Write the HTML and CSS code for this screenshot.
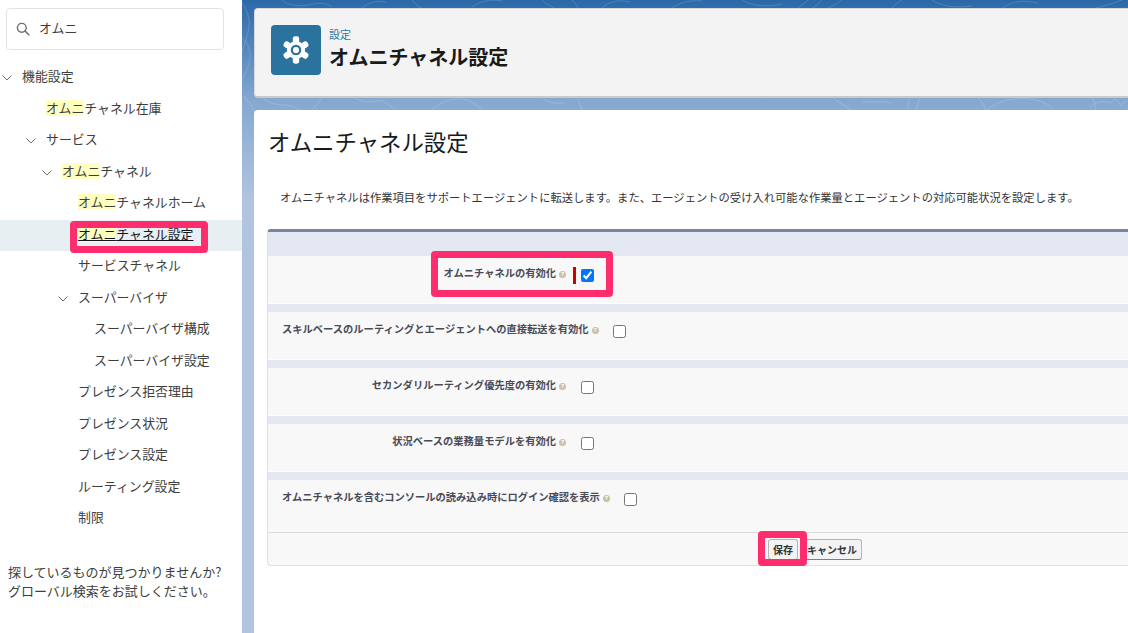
FILE: index.html
```html
<!DOCTYPE html>
<html lang="ja">
<head>
<meta charset="utf-8">
<title>オムニチャネル設定</title>
<link rel="stylesheet" href="styles.css">
</head>
<body>
<div class="stage">
  <aside class="sidebar">
    <div class="search-wrap">
      <div class="search">
        <svg class="search-icon" viewBox="0 0 14 14" width="14" height="14"><circle cx="5.8" cy="5.8" r="4.4" fill="none" stroke="#706e6b" stroke-width="1.4"/><path d="M9 9l3.8 3.8" stroke="#706e6b" stroke-width="1.6" stroke-linecap="round"/></svg>
        <span>オムニ</span>
      </div>
    </div>
    <ul class="tree">
      <li class="node l0"><svg class="chev" viewBox="0 0 10 6" width="10" height="6"><path d="M.5.5L5 5 9.5.5" fill="none" stroke="#706e6b" stroke-width="1"/></svg><a>機能設定</a></li>
      <li class="node l1"><a><mark>オムニ</mark>チャネル在庫</a></li>
      <li class="node l1"><svg class="chev" viewBox="0 0 10 6" width="10" height="6"><path d="M.5.5L5 5 9.5.5" fill="none" stroke="#706e6b" stroke-width="1"/></svg><a>サービス</a></li>
      <li class="node l2"><svg class="chev" viewBox="0 0 10 6" width="10" height="6"><path d="M.5.5L5 5 9.5.5" fill="none" stroke="#706e6b" stroke-width="1"/></svg><a><mark>オムニ</mark>チャネル</a></li>
      <li class="node l3"><a><mark>オムニ</mark>チャネルホーム</a></li>
      <li class="node l3 selected"><a><mark>オムニ</mark>チャネル設定</a></li>
      <li class="node l3"><a>サービスチャネル</a></li>
      <li class="node l3"><svg class="chev" viewBox="0 0 10 6" width="10" height="6"><path d="M.5.5L5 5 9.5.5" fill="none" stroke="#706e6b" stroke-width="1"/></svg><a>スーパーバイザ</a></li>
      <li class="node l4"><a>スーパーバイザ構成</a></li>
      <li class="node l4"><a>スーパーバイザ設定</a></li>
      <li class="node l3"><a>プレゼンス拒否理由</a></li>
      <li class="node l3"><a>プレゼンス状況</a></li>
      <li class="node l3"><a>プレゼンス設定</a></li>
      <li class="node l3"><a>ルーティング設定</a></li>
      <li class="node l3"><a>制限</a></li>
    </ul>
    <p class="hint">探しているものが見つかりませんか?<br>グローバル検索をお試しください。</p>
  </aside>

  <main class="main">
    <svg class="pattern" viewBox="0 0 886 633" width="886" height="633" fill="none" stroke="#fff" stroke-opacity=".16" stroke-width="1">
      <path d="M0 2c4 8 8 14 7 24s-5 18-7 26"/>
      <path d="M-2 36c6 4 11 12 10 22s-6 16-8 22"/>
      <path d="M2 96c3 6 9 8 10 16"/>
      <path d="M40 0c6 5 16 7 26 5s18-3 24 2"/>
      <path d="M120 8c6-5 14-8 24-6"/>
      <path d="M170 0c6 5 4 6 10 8"/>
      <path d="M230 7c8-6 18-8 30-6"/>
      <path d="M300 0c4 4 8 6 12 8M330 0c3 3 5 6 6 8M360 8c6-6 16-9 28-6"/>
      <path d="M430 8c8-6 18-8 30-7M500 0c8 5 22 8 40 4"/>
      <path d="M566 0c-2 2-8 6-10 8M580 0c-3 3-7 6-9 8M600 0c-4 3-10 6-14 8"/>
      <path d="M650 8c4-4 6-6 10-8M690 0c10 7 26 8 40 6M760 8c10-7 22-8 36-5M880 0c-8 3-18 6-26 8"/>
      <path d="M20 97c4 4 12 8 20 8s12 2 18 5M70 110c6-6 8-10 10-13M110 97c8 4 16 6 24 4s12 4 20 9"/>
      <path d="M190 110c6-6 14-10 24-11s18 3 26 11M300 97c4 5 12 7 22 6M340 110c-2-4-4-9-4-13"/>
      <path d="M590 97c6 5 12 8 18 13M620 102c8 0 20-1 30 1M668 97l-3 13M678 97l-4 13"/>
      <path d="M735 97c6 6 8 9 8 13M745 110c10-9 26-13 42-11s20 6 24 11M850 97c2 4 4 9 3 13M848 108c4-6 12-8 20-5l6-4 4 6 6-4"/>
    </svg>

    <section class="page-head">
      <div class="app-icon">
        <svg viewBox="0 0 28 28" width="28" height="28">
          <g fill="#fff">
            <circle cx="14" cy="14" r="9"/>
            <rect x="10.8" y="0.3" width="6.4" height="7" rx="2.4"/>
            <rect x="10.8" y="20.7" width="6.4" height="7" rx="2.4"/>
            <rect x="10.8" y="0.3" width="6.4" height="7" rx="2.4" transform="rotate(60 14 14)"/>
            <rect x="10.8" y="0.3" width="6.4" height="7" rx="2.4" transform="rotate(120 14 14)"/>
            <rect x="10.8" y="0.3" width="6.4" height="7" rx="2.4" transform="rotate(240 14 14)"/>
            <rect x="10.8" y="0.3" width="6.4" height="7" rx="2.4" transform="rotate(300 14 14)"/>
          </g>
          <circle cx="14" cy="14" r="4.2" fill="none" stroke="#2a739f" stroke-width="2.2"/>
        </svg>
      </div>
      <div class="head-text">
        <div class="crumb">設定</div>
        <h1>オムニチャネル設定</h1>
      </div>
    </section>

    <section class="content">
      <h2>オムニチャネル設定</h2>
      <p class="desc">オムニチャネルは作業項目をサポートエージェントに転送します。また、エージェントの受け入れ可能な作業量とエージェントの対応可能状況を設定します。</p>

      <form class="block">
        <div class="block-head"></div>
        <div class="row first">
          <label class="lbl">オムニチャネルの有効化<span class="help">?</span></label>
          <span class="required"></span>
          <input class="cb" type="checkbox" checked>
        </div>
        <div class="band"></div>
        <div class="row">
          <label class="lbl">スキルベースのルーティングとエージェントへの直接転送を有効化<span class="help">?</span></label>
          <input class="cb" type="checkbox">
        </div>
        <div class="band"></div>
        <div class="row">
          <label class="lbl">セカンダリルーティング優先度の有効化<span class="help">?</span></label>
          <input class="cb" type="checkbox">
        </div>
        <div class="band"></div>
        <div class="row">
          <label class="lbl">状況ベースの業務量モデルを有効化<span class="help">?</span></label>
          <input class="cb" type="checkbox">
        </div>
        <div class="band"></div>
        <div class="row last">
          <label class="lbl">オムニチャネルを含むコンソールの読み込み時にログイン確認を表示<span class="help">?</span></label>
          <input class="cb" type="checkbox">
        </div>
        <div class="actions">
          <button type="button" class="btn">保存</button>
          <button type="button" class="btn btn-cancel">キャンセル</button>
        </div>
      </form>
    </section>
  </main>

  <div class="callout c-nav"></div>
  <div class="callout c-enable"></div>
  <div class="callout c-save"></div>
</div>
</body>
</html>
```
FILE: styles.css
```css
* { box-sizing: border-box; }
html, body { margin: 0; padding: 0; height: 100%; }
body {
  font-family: "Noto Sans CJK JP", "Noto Sans", sans-serif;
  color: #16325c;
  overflow: hidden;
}
.stage {
  position: relative;
  display: flex;
  width: 1128px;
  height: 633px;
  overflow: hidden;
}

/* sidebar */
.sidebar {
  width: 242px;
  flex: none;
  background: #fff;
  color: #3e3e3c;
  font-size: 12.9px;
}
.search-wrap { padding: 8px 18px 0 6px; }
.search {
  display: flex;
  align-items: center;
  gap: 9px;
  height: 42px;
  padding: 0 0 4px 9px;
  border: 1px solid #e3e3e3;
  border-radius: 4px;
  color: #3e3e3c;
}
.search-icon { flex: none; margin-top: 4px; }
.tree { list-style: none; margin: 12px 0 0; padding: 0; }
.node {
  position: relative;
  height: 31.5px;
  line-height: 28.4px;
  white-space: nowrap;
}
.node a { color: #3e3e3c; }
.node mark {
  display: inline-block;
  line-height: 16px;
  background: #ffffc0;
  color: inherit;
}
.l0 { padding-left: 22px; }
.l1 { padding-left: 46px; }
.l2 { padding-left: 62px; }
.l3 { padding-left: 78px; }
.l4 { padding-left: 94px; }
.chev { position: absolute; top: 13px; }
.l0 .chev { left: 2px; }
.l1 .chev { left: 26px; }
.l2 .chev { left: 42px; }
.l3 .chev { left: 58px; }
.selected { background: #e8eff3; }
.selected a, .selected mark { color: #16161a; text-decoration: underline; }
.hint {
  margin: 27px 0 0;
  padding-left: 8px;
  font-size: 13px;
  line-height: 19px;
  color: #3e3e3c;
}

/* main */
.main {
  position: relative;
  flex: 1;
  min-width: 0;
  padding: 8px 0 0 12px;
  background: linear-gradient(180deg, #2a69a8 0, #85a8d0 100px, #b0c4df 200px);
}
.pattern { position: absolute; left: 0; top: 0; }
.page-head {
  position: relative;
  display: flex;
  align-items: center;
  gap: 8px;
  height: 90px;
  margin-right: -20px;
  padding: 0 16px 5px;
  background: #f3f3f3;
  border: 1px solid #d8d8d8;
  border-bottom: 2px solid #c9c9c9;
  border-radius: 4px;
}
.app-icon {
  display: flex;
  align-items: center;
  justify-content: center;
  width: 50px;
  height: 50px;
  border-radius: 4px;
  background: #2a739f;
  flex: none;
}
.head-text { margin-top: -2px; }
.crumb { font-size: 11px; line-height: 16px; color: #2a78a8; }
h1 {
  margin: 0;
  font-size: 20px;
  line-height: 30px;
  font-weight: 700;
  color: #1a1a1a;
}
.content {
  position: relative;
  height: 540px;
  margin: 12px -20px 0 0;
  padding: 13px 0 0 14px;
  background: #fff;
  border-radius: 4px 0 0 0;
}
h2 {
  margin: 0;
  font-size: 22.4px;
  line-height: 36px;
  font-weight: 400;
  color: #1a1a1a;
}
.desc {
  margin: 30px 0 0 12px;
  font-size: 11.3px;
  line-height: 16px;
  color: #333;
  white-space: nowrap;
}

/* form block */
.block {
  margin-top: 24px;
  margin-left: -1px;
  border-left: 1px solid #e0e0e0;
  border-bottom: 1px solid #e0e0e0;
  border-top: 3px solid #7a829f;
  border-radius: 4px 0 0 4px;
  background: #f8f8f8;
}
.block-head { height: 24px; background: #e3e7f1; }
.row {
  display: flex;
  align-items: flex-start;
  height: 47px;
  padding-top: 9px;
}
.band {
  height: 9px;
  border-top: 1px solid #fff;
  background: #e3e7f1;
}
.row.last { height: 53px; border-bottom: 1px solid #dcdcdc; }
.lbl {
  display: flex;
  align-items: center;
  justify-content: flex-end;
  min-width: 298px;
  padding-left: 14px;
  font-size: 10.27px;
  line-height: 16px;
  font-weight: 700;
  color: #4a4a56;
  white-space: nowrap;
}
.help {
  display: inline-block;
  width: 7px;
  height: 7px;
  margin: 2px 0 0 3px;
  border-radius: 50%;
  background: #c8bfa6;
  color: #fff;
  font-size: 6px;
  line-height: 7px;
  text-align: center;
  font-weight: 700;
  font-family: "Liberation Sans", sans-serif;
}
.cb {
  width: 13px;
  height: 13px;
  margin: 4px 0 0 14.6px;
  flex: none;
}
.required {
  display: block;
  width: 3px;
  height: 17px;
  margin: 2px -10px 0 7px;
  background: #c00;
}
.actions {
  display: flex;
  justify-content: flex-start;
  height: 32px;
  padding: 6px 0 0 500px;
}
.btn {
  height: 21px;
  padding: 0 4px;
  border: 1px solid #b5b5b5;
  border-bottom-color: #7f7f7f;
  border-radius: 3px;
  background: #f3f3f3;
  font-family: inherit;
  font-size: 10px;
  line-height: 16px;
  font-weight: 700;
  color: #333;
}
.btn-cancel { margin-left: 3px; padding: 0 4px 0 5px; }

/* pink annotations */
.callout {
  position: absolute;
  border: 7px solid #fe2e6e;
  border-radius: 4px;
}
.c-nav { left: 70px; top: 221px; width: 138px; height: 32px; }
.c-enable { left: 431px; top: 251px; width: 182px; height: 46px; }
.c-save { left: 758px; top: 531px; width: 49px; height: 35px; }
```
